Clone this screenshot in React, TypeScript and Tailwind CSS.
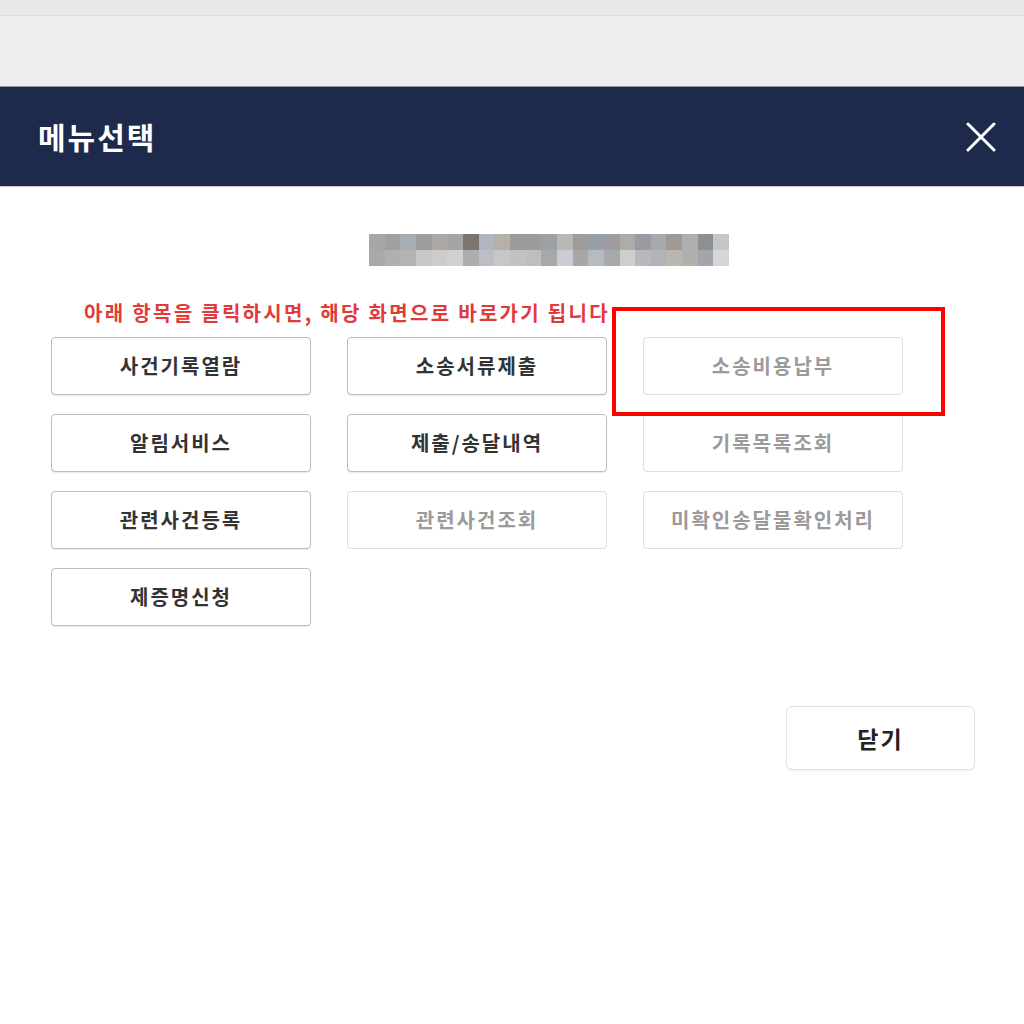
const enabledBtn = 'h-[58px] rounded-[4px] border border-[#bdbdbd] bg-white text-[20px] font-bold tracking-[2px] text-[#333333] shadow-[0_1px_1px_rgba(0,0,0,0.08)]'
const disabledBtn = 'h-[58px] rounded-[4px] border border-[#dedede] bg-white text-[20px] font-bold tracking-[2px] text-[#9a9a9a]'

const menus = [
  { label: '사건기록열람', on: true },
  { label: '소송서류제출', on: true },
  { label: '소송비용납부', on: false },
  { label: '알림서비스', on: true },
  { label: '제출/송달내역', on: true },
  { label: '기록목록조회', on: false },
  { label: '관련사건등록', on: true },
  { label: '관련사건조회', on: false },
  { label: '미확인송달물확인처리', on: false },
  { label: '제증명신청', on: true },
]

// mosaic over the case number
const mosaicTop = ['#a6a6a6', '#a0a0a0', '#a8adb2', '#9e9e9e', '#aba8a5', '#a5a5a5', '#7a7570', '#b0b6c1', '#b6b0ab', '#9c9c9c', '#9a9c9e', '#9ea1a3', '#b8b8b8', '#a09c99', '#96a0a8', '#a09ca1', '#aeaca9', '#9e99a2', '#a8a9ab', '#a19994', '#aeafb1', '#8e8f90', '#c5c6ca']
const mosaicBottom = ['#a9a9a9', '#b0b0b0', '#b4b4b4', '#c8c8c8', '#cccccc', '#d0d2d0', '#adadad', '#bbbec2', '#c5c7c9', '#bfc2c4', '#bcbec0', '#a8a8a8', '#c9cdd3', '#a9a6a3', '#b7babe', '#a5a9ac', '#cdcfca', '#b9b8bc', '#b0b4b8', '#bab6b2', '#b2b0ae', '#a0a6ab', '#d6d6d6']

export default function App() {
  return (
    <div className="min-h-[1024px] bg-white" style={{ fontFamily: '"Noto Sans CJK KR", "Noto Sans", sans-serif' }}>
      {/* browser strip */}
      <div className="h-[16px] border-b border-[#dcdde1] bg-[#e7e8ea]" />
      <div className="h-[71px] border-b border-[#9a9a9a] bg-[#eeeeee]" />

      {/* modal header */}
      <div className="flex h-[100px] items-center justify-between border-b border-[#c8c8cc] bg-[#1e2a4b] pl-[38px] pr-[27px]">
        <h1 className="text-[30px] font-bold tracking-[2px] text-white">메뉴선택</h1>
        <button className="flex h-[32px] w-[32px] items-center justify-center">
          <svg width="30" height="30" viewBox="0 0 30 30" fill="none">
            <path d="M2 2L28 28M28 2L2 28" stroke="white" strokeWidth="3" strokeLinecap="round" />
          </svg>
        </button>
      </div>

      {/* body */}
      <div className="pt-[47px]">
        <div className="ml-[369px] flex w-[360px] flex-col">
          <div className="flex h-[16px]">
            {mosaicTop.map((c, i) => (
              <div key={i} className="flex-1" style={{ backgroundColor: c }} />
            ))}
          </div>
          <div className="flex h-[16px]">
            {mosaicBottom.map((c, i) => (
              <div key={i} className="flex-1" style={{ backgroundColor: c }} />
            ))}
          </div>
        </div>

        <p className="mt-[35px] pl-[84px] text-[20px] font-bold leading-[24px] tracking-[2.3px] text-[#e03a3a]">
          아래 항목을 클릭하시면, 해당 화면으로 바로가기 됩니다
        </p>

        <div className="relative ml-[51px] mt-[12px] grid w-[852px] grid-cols-3 gap-x-[36px] gap-y-[19px]">
          {menus.map((m) => (
            <button key={m.label} className={m.on ? enabledBtn : disabledBtn}>
              {m.label}
            </button>
          ))}
          <div className="pointer-events-none absolute left-[561px] top-[-30px] h-[109px] w-[333px] border-[4px] border-[#ff0000]" />
        </div>

        <div className="mr-[49px] mt-[80px] flex justify-end">
          <button className="h-[64px] w-[189px] rounded-[6px] border border-[#e0e0e2] bg-white text-[23px] font-bold tracking-[2px] text-[#222222] shadow-[0_1px_2px_rgba(0,0,0,0.06)]">
            닫기
          </button>
        </div>
      </div>
    </div>
  )
}
